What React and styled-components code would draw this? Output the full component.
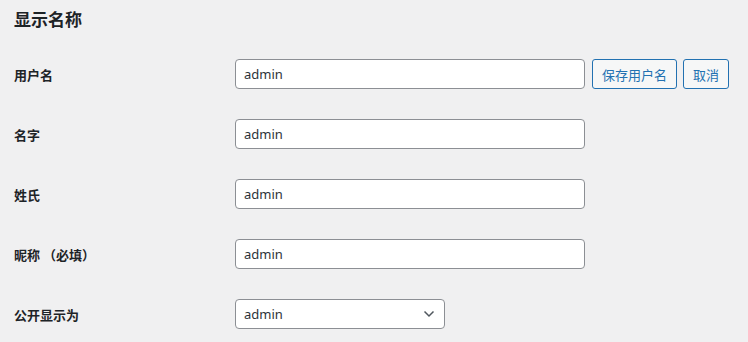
import React from "react";
import styled, { createGlobalStyle } from "styled-components";

const Global = createGlobalStyle`
  html, body { margin: 0; padding: 0; background: #f0f0f1; }
  body { font-family: "Segoe UI", "Noto Sans", "Noto Sans CJK SC", sans-serif; color: #1d2327; }
`;

const Page = styled.div`
  padding: 8px 14px 0 14px;
`;

const Heading = styled.h2`
  margin: 0;
  font-size: 17px;
  line-height: 22px;
  font-weight: 600;
  font-family: "Noto Sans CJK SC", sans-serif;
`;

const Form = styled.div`
  margin-top: 29px;
  display: flex;
  flex-direction: column;
  gap: 30px;
`;

const Row = styled.div`
  display: grid;
  grid-template-columns: 221px auto;
  align-items: center;
  height: 30px;
`;

const Label = styled.div`
  font-family: "Noto Sans CJK SC", sans-serif;
  font-size: 13px;
  font-weight: 600;
  white-space: pre;
`;

const Field = styled.div`
  display: flex;
  align-items: center;
  gap: 6px;
`;

const Input = styled.input`
  box-sizing: border-box;
  width: 350px;
  height: 30px;
  margin: 0 1px 0 0;
  padding: 0 8px;
  border: 1px solid #8c8f94;
  border-radius: 4px;
  background: #fff;
  color: #2c3338;
  font-family: "Noto Sans", sans-serif;
  font-size: 13px;
  outline: none;
`;

const Button = styled.button`
  box-sizing: border-box;
  height: 30px;
  padding: 0 9px;
  border: 1px solid #2271b1;
  border-radius: 3px;
  background: #f6f7f7;
  color: #2271b1;
  font-family: "Noto Sans CJK SC", sans-serif;
  font-size: 13px;
  cursor: pointer;
`;

const SelectBox = styled.div`
  box-sizing: border-box;
  width: 210px;
  height: 30px;
  display: flex;
  align-items: center;
  justify-content: space-between;
  padding: 0 7px 0 8px;
  border: 1px solid #8c8f94;
  border-radius: 4px;
  background: #fff;
  color: #2c3338;
  font-family: "Noto Sans", sans-serif;
  font-size: 13px;
`;

const Chevron = () => (
  <svg width="16" height="16" viewBox="0 0 16 16" aria-hidden="true">
    <path d="M3.5 5.5 L8 10 L12.5 5.5" fill="none" stroke="#50575e" strokeWidth="1.5" />
  </svg>
);

export default function App() {
  return (
    <>
      <Global />
      <Page>
        <Heading>显示名称</Heading>
        <Form>
          <Row>
            <Label>用户名</Label>
            <Field>
              <Input defaultValue="admin" />
              <Button>保存用户名</Button>
              <Button>取消</Button>
            </Field>
          </Row>
          <Row>
            <Label>名字</Label>
            <Field><Input defaultValue="admin" /></Field>
          </Row>
          <Row>
            <Label>姓氏</Label>
            <Field><Input defaultValue="admin" /></Field>
          </Row>
          <Row>
            <Label>昵称 （必填）</Label>
            <Field><Input defaultValue="admin" /></Field>
          </Row>
          <Row>
            <Label>公开显示为</Label>
            <Field>
              <SelectBox>
                <span>admin</span>
                <Chevron />
              </SelectBox>
            </Field>
          </Row>
        </Form>
      </Page>
    </>
  );
}
